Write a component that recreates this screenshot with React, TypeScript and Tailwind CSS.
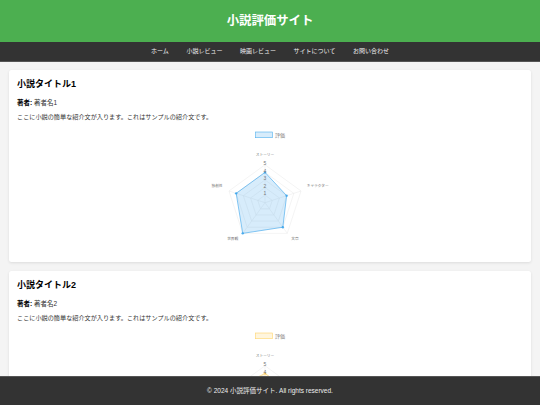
import * as React from "react";

const AXES = ["ストーリー", "キャラクター", "文章", "世界観", "独創性"];
const NAV = ["ホーム", "小説レビュー", "映画レビュー", "サイトについて", "お問い合わせ"];

const CX = 95;
const CY = 76.7;
const R = 37.9;

function pt(axis: number, value: number): [number, number] {
    const a = (axis * 2 * Math.PI) / 5 - Math.PI / 2;
    const r = (R * value) / 5;
    return [CX + r * Math.cos(a), CY + r * Math.sin(a)];
}

function poly(values: number[]): string {
    return values.map((v, i) => pt(i, v).join(",")).join(" ");
}

const LABEL_POS: [number, number][] = [
    [95, 30.3],
    [147.7, 60.8],
    [125, 114.3],
    [62.7, 114.3],
    [47, 60.8],
];

function Radar({ values, fill, stroke }: { values: number[]; fill: string; stroke: string }) {
    return (
        <svg width="200" height="126" viewBox="0 0 200 126" className="block mx-auto">
            <rect x="85.5" y="6" width="17" height="5.7" fill={fill} stroke={stroke} strokeWidth="0.6" />
            <text x="105" y="10.7" fontSize="5" fill="#777">評価</text>
            {[1, 2, 3, 4, 5].map((v) => (
                <polygon key={v} points={poly([v, v, v, v, v])} fill="none" stroke="#e8e8e8" strokeWidth="0.5" />
            ))}
            {AXES.map((_, i) => {
                const [x, y] = pt(i, 5);
                return <line key={i} x1={CX} y1={CY} x2={x} y2={y} stroke="#e8e8e8" strokeWidth="0.5" />;
            })}
            <polygon points={poly(values)} fill={fill} stroke={stroke} strokeWidth="0.7" />
            {values.map((v, i) => {
                const [x, y] = pt(i, v);
                return <circle key={i} cx={x} cy={y} r="1.2" fill={stroke} />;
            })}
            {[1, 2, 3, 4, 5].map((v) => (
                <text key={v} x={CX} y={CY - 7.58 * v + 0.3} fontSize="5" fill="#777" textAnchor="middle">
                    {v}
                </text>
            ))}
            {AXES.map((label, i) => (
                <text key={label} x={LABEL_POS[i][0]} y={LABEL_POS[i][1]} fontSize="3.7" fill="#777" textAnchor="middle">
                    {label}
                </text>
            ))}
        </svg>
    );
}

function Card({ n, values, fill, stroke }: { n: number; values: number[]; fill: string; stroke: string }) {
    return (
        <section className="bg-white rounded-[2.5px] shadow-[0_1px_3px_rgba(0,0,0,0.1)] pt-[8px] px-[8px] pb-[10px] shrink-0">
            <h2 className="text-[9px] leading-[13px] font-bold text-black">小説タイトル{n}</h2>
            <p className="text-[6.5px] leading-[9px] text-[#333] mt-[7px]">
                <strong className="text-black">著者:</strong> 著者名{n}
            </p>
            <p className="text-[6.15px] leading-[9px] text-[#333] mt-[5px]">
                ここに小説の簡単な紹介文が入ります。これはサンプルの紹介文です。
            </p>
            <div className="mt-[5px]">
                <Radar values={values} fill={fill} stroke={stroke} />
            </div>
        </section>
    );
}

export default function App() {
    return (
        <div className="h-screen flex flex-col overflow-hidden bg-[#f4f4f4] font-['Liberation_Sans','Noto_Sans_CJK_JP',sans-serif]">
            <header className="h-[42px] shrink-0 bg-[#4caf50] flex items-center justify-center">
                <h1 className="text-[12.4px] font-bold text-white">小説評価サイト</h1>
            </header>
            <nav className="h-[20px] shrink-0 bg-[#333] flex items-center justify-center gap-[17.6px] border-b border-[#555]">
                {NAV.map((item) => (
                    <a key={item} className="text-[6px] text-[#eee]">{item}</a>
                ))}
            </nav>
            <main className="flex-1 min-h-0 overflow-hidden px-[9px] pt-[8px] flex flex-col gap-[9px]">
                <Card n={1} values={[4, 3, 4, 5, 4]} fill="rgba(54,162,235,0.2)" stroke="rgba(54,162,235,0.85)" />
                <Card n={2} values={[4, 4, 3, 4, 5]} fill="rgba(255,206,86,0.2)" stroke="rgba(255,206,86,0.85)" />
            </main>
            <footer className="h-[29px] shrink-0 bg-[#333] flex items-center justify-center border-t border-[#555]">
                <p className="text-[6.5px] text-[#eee]">© 2024 小説評価サイト. All rights reserved.</p>
            </footer>
        </div>
    );
}
